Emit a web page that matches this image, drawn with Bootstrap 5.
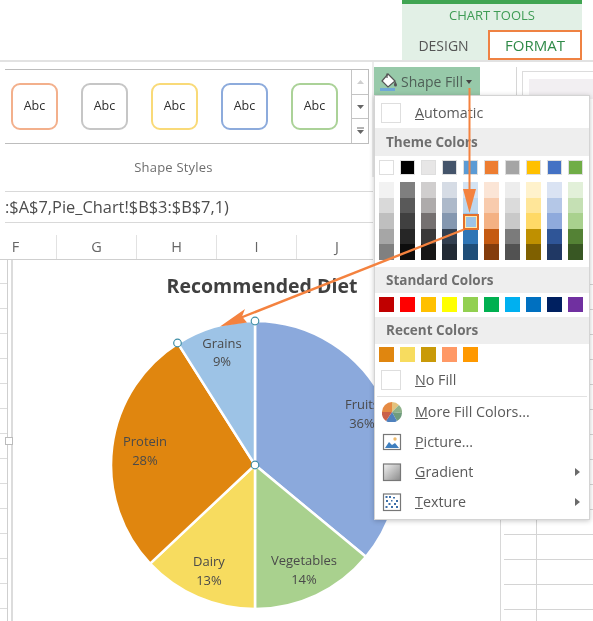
<!DOCTYPE html>
<html lang="en">
<head>
<meta charset="utf-8">
<title>Shape Fill</title>
<link href="https://cdn.jsdelivr.net/npm/bootstrap@5.3.0/dist/css/bootstrap.min.css" rel="stylesheet">
<style>
html,body{margin:0;background:#fff}
body{font-family:"Open Sans","Liberation Sans",sans-serif;color:#555}
.stage{width:593px;height:621px;position:relative;overflow:hidden;background:#fff;filter:blur(.3px)}
.topstrip{height:60px;padding-right:11px}
.ctxgroup{width:180px;background:#e2f0e6;border-top:4px solid #40a552}
.ctxlabel{height:26px;line-height:23px;color:#3f9c55;font-size:13px;text-align:center}
.ctxtabs{height:30px}
.ctxdesign{width:86px;padding-right:3px;line-height:31px;text-align:center;color:#555;font-size:14px}
.ctxformat{width:94px;background:#fff;border:2px solid #ef8243;color:#2f8a48;font-size:15px;line-height:27px;text-align:center}
.ribbonrow{height:117px;border-top:2px solid #e2e2e2}
.ribbonleft{width:374px;padding-left:5px;border-right:2px solid #ececec}
.gallery{width:364px;height:75px;margin-top:7px;border:1.5px solid #bdbdbd;border-left:0;padding-left:6px}
.abc{width:47px;height:47px;flex:none;border:2px solid;border-radius:9px;font-size:12.5px;color:#2e2e2e}
.abc+.abc{margin-left:23px}
.abc1{border-color:#f3b08c}.abc2{border-color:#c6c6c6}.abc3{border-color:#f9da78}.abc4{border-color:#8dabdc}.abc5{border-color:#abd298}
.gscroll{width:17px;height:100%;margin-left:auto;border-left:1px solid #c4c4c4;flex:none}
.gscroll>div{flex:1;border-bottom:1px solid #c4c4c4}
.gscroll>div:last-child{border-bottom:0}
.styleslabel{width:337px;margin-top:14px;text-align:center;font-size:13px;color:#6e6e6e;letter-spacing:.2px}
.shapefill{width:106px;height:29px;margin-top:5px;background:#97c9a9;color:#4f5f57;font-size:14px;gap:2px;padding-left:5px}
.caret-mini{width:0;height:0;margin-left:1px;border-left:3.5px solid transparent;border-right:3.5px solid transparent;border-top:4px solid #444}
.rdivider{width:1px;height:28px;margin:5px 0 0 36px;background:#d6d6d6}
.rthumb{width:71px;height:25px;margin:9px 0 0 5px;border:1px solid #dcdcdc;border-right:0;border-bottom:0;padding:7px 0 0 6px}
.rthumb div{height:20px;background:#f2eff2}
.formula{height:32px;margin-top:14px;margin-left:5px;width:368px;border-top:1.5px solid #d9d9d9;border-bottom:1.5px solid #d9d9d9;font-size:16.4px;line-height:29px;color:#4d4d4d;white-space:nowrap}
.colheads{height:37px;width:373px;border-bottom:1.5px solid #cfcfcf;padding-top:12px;font-size:14.5px;color:#666}
.colh{width:80px;text-align:center;border-right:1px solid #e2e2e2;line-height:24px;flex:none}
.colh0{width:57px;padding-right:25px}
.sheetrow{height:362px}
.rowticks{width:7px;background:repeating-linear-gradient(#fff 0 23px,#dcdcdc 23px 24px,#fff 24px 25px)}
.chartframe{width:494px;border-left:1.5px solid #cfcfcf;border-right:1.5px solid #d8d8d8;position:relative}
.chartframe::before{content:"";position:absolute;left:3px;top:0;bottom:0;width:1.5px;background:#dcdcdc}
.chartsvg{position:absolute;left:-8.5px;top:-260px;width:593px;height:621px;overflow:hidden}
.chartsvg text{font-family:"Open Sans","Liberation Sans",sans-serif;font-size:13px;fill:#4a4a4a;text-anchor:middle}
.chartsvg .ctitle{font-size:19.5px;font-weight:700;fill:#404040}
.handle{position:absolute;left:-3px;width:8px;height:8px;border:1px solid #bbb;background:#fff;z-index:1}
.handlemid{top:177px}
.gridright{margin-left:3px;flex:1;background:repeating-linear-gradient(#fff 0 24px,#d4d4d4 24px 25px) 0 0;position:relative}
.gridright::before{content:"";position:absolute;left:32px;top:0;bottom:0;width:1px;background:#d4d4d4}
.fillmenu.dropdown-menu{left:374px;top:95px;width:216px;height:425px;padding:4px 0 0;margin:0;border:1px solid #d4d4d4;border-radius:0;box-shadow:0 1px 5px rgba(0,0,0,.22);font-size:14px;color:#555;z-index:5;min-width:0}
.fillmenu .dropdown-item{height:25px;padding:0 0 0 40px;line-height:25px;color:#5a5a5a;position:relative;font-size:14.3px}
.fillmenu .iconrow{height:30px;line-height:30px}
.checkbox-mini{position:absolute;left:6px;top:3px;width:20px;height:20px;border:1px solid #dedede;background:#fff}
.micon{position:absolute;left:7px;top:5px;width:20px;height:20px}
.subarrow{position:absolute;right:9px;top:11px;width:0;height:0;border-top:4px solid transparent;border-bottom:4px solid transparent;border-left:5px solid #6a6a6a}
.fillmenu .dropdown-header{background:#eeeeee;padding:0 0 0 11px;color:#6f6f6f;font-weight:700;font-size:13.5px;display:flex;align-items:center}
.head1{height:28px;margin-top:3px}.head2{height:26px;margin-top:7px}.head3{height:27px;margin-top:5px}
.chips{gap:6px;padding-left:4px}
.chips>div{width:15px;height:15px}
.chips1{margin-top:4px}.chips2{margin-top:4px}.chips3{margin-top:3px}
.chips1>div{outline:1px solid #dedede;outline-offset:-1px}
.chips1>div:nth-child(1){background:#fff}.chips1>div:nth-child(2){background:#000}.chips1>div:nth-child(3){background:#e7e6e6}.chips1>div:nth-child(4){background:#44546a}.chips1>div:nth-child(5){background:#5b9bd5}.chips1>div:nth-child(6){background:#ed7d31}.chips1>div:nth-child(7){background:#a5a5a5}.chips1>div:nth-child(8){background:#ffc000}.chips1>div:nth-child(9){background:#4472c4}.chips1>div:nth-child(10){background:#70ad47}
.chips2>div:nth-child(1){background:#c00000}.chips2>div:nth-child(2){background:#f00}.chips2>div:nth-child(3){background:#ffc000}.chips2>div:nth-child(4){background:#ff0}.chips2>div:nth-child(5){background:#92d050}.chips2>div:nth-child(6){background:#00b050}.chips2>div:nth-child(7){background:#00b0f0}.chips2>div:nth-child(8){background:#0070c0}.chips2>div:nth-child(9){background:#002060}.chips2>div:nth-child(10){background:#7030a0}
.chips3>div:nth-child(1){background:#e0860f}.chips3>div:nth-child(2){background:#f7dc5f}.chips3>div:nth-child(3){background:#c99a08}.chips3>div:nth-child(4){background:#ff9966}.chips3>div:nth-child(5){background:#f90}
.shades{margin-top:7px}
.shades>div{height:78px}
.shades>div:nth-child(1){background:linear-gradient(#f2f2f2 20%,#d9d9d9 20% 40%,#bfbfbf 40% 60%,#a6a6a6 60% 80%,#808080 80%)}
.shades>div:nth-child(2){background:linear-gradient(#7f7f7f 20%,#595959 20% 40%,#404040 40% 60%,#262626 60% 80%,#0d0d0d 80%)}
.shades>div:nth-child(3){background:linear-gradient(#d0cece 20%,#aeabab 20% 40%,#757070 40% 60%,#3a3838 60% 80%,#171616 80%)}
.shades>div:nth-child(4){background:linear-gradient(#d6dce5 20%,#adb9ca 20% 40%,#8497b0 40% 60%,#333f50 60% 80%,#222a35 80%)}
.shades>div:nth-child(5){background:linear-gradient(#d4e3f3 20%,#bdd7ee 20% 40%,#9dc3e6 40% 60%,#2e75b6 60% 80%,#1f4e79 80%);position:relative}
.shades>div:nth-child(6){background:linear-gradient(#fbe5d6 20%,#f8cbad 20% 40%,#f4b183 40% 60%,#c55a11 60% 80%,#843c0c 80%)}
.shades>div:nth-child(7){background:linear-gradient(#ededed 20%,#dbdbdb 20% 40%,#c9c9c9 40% 60%,#7b7b7b 60% 80%,#525252 80%)}
.shades>div:nth-child(8){background:linear-gradient(#fff2cc 20%,#ffe699 20% 40%,#ffd966 40% 60%,#bf9000 60% 80%,#7f6000 80%)}
.shades>div:nth-child(9){background:linear-gradient(#dae3f3 20%,#b4c7e7 20% 40%,#8faadc 40% 60%,#2f5597 60% 80%,#203864 80%)}
.shades>div:nth-child(10){background:linear-gradient(#e2f0d9 20%,#c5e0b4 20% 40%,#a9d18e 40% 60%,#548235 60% 80%,#385723 80%)}
.picked{position:absolute;left:0;top:32px;width:16px;height:16px;border:2px solid #e4702c;box-shadow:inset 0 0 0 1px #ffe9a8}
.mrow-fill{margin-top:5px}
.msep{height:1px;margin:4px 2px 0;background:#e2e2e2}
.arrows{position:absolute;left:0;top:0;width:593px;height:621px;z-index:6;pointer-events:none}
</style>
</head>
<body>
<div class="stage">
  <div class="topstrip d-flex justify-content-end">
    <div class="ctxgroup">
      <div class="ctxlabel">CHART TOOLS</div>
      <div class="ctxtabs d-flex">
        <div class="ctxdesign">DESIGN</div>
        <div class="ctxformat">FORMAT</div>
      </div>
    </div>
  </div>

  <div class="ribbonrow d-flex">
    <div class="ribbonleft">
      <div class="gallery d-flex align-items-center">
        <div class="abc abc1 d-flex align-items-center justify-content-center">Abc</div>
        <div class="abc abc2 d-flex align-items-center justify-content-center">Abc</div>
        <div class="abc abc3 d-flex align-items-center justify-content-center">Abc</div>
        <div class="abc abc4 d-flex align-items-center justify-content-center">Abc</div>
        <div class="abc abc5 d-flex align-items-center justify-content-center">Abc</div>
        <div class="gscroll d-flex flex-column">
          <div class="d-flex align-items-center justify-content-center"><svg width="9" height="6" viewBox="0 0 9 6"><path d="M1 5h7L4.500 1z" fill="#cfcfcf"/></svg></div>
          <div class="d-flex align-items-center justify-content-center"><svg width="9" height="6" viewBox="0 0 9 6"><path d="M1 1h7L4.500 5z" fill="#666"/></svg></div>
          <div class="d-flex align-items-center justify-content-center"><svg width="9" height="8" viewBox="0 0 9 8"><path d="M1 1h7" stroke="#666"/><path d="M1 3h7L4.500 7z" fill="#666"/></svg></div>
        </div>
      </div>
      <div class="styleslabel">Shape Styles</div>
    </div>
    <div class="d-flex flex-grow-1 align-items-start">
      <div class="shapefill d-flex align-items-center">
        <svg width="20" height="20" viewBox="0 0 20 20"><path d="M9 2 3 9l6 6 7-6z" fill="#fff" stroke="#555" stroke-width="1.2"/><path d="M8 6V1.500" stroke="#555" stroke-width="1.200"/><path d="M16 9c1 1.500 2 3 2 4a1.500 1.500 0 0 1-3 0c0-1 .5-2.500 1-4z" fill="#555"/><rect x="1" y="16" width="15" height="3" fill="#6fa8d6"/></svg>
        <span>Shape Fill</span>
        <span class="caret-mini"></span>
      </div>
      <div class="rdivider"></div>
      <div class="rthumb flex-grow-1"><div></div></div>
    </div>
  </div>

  <div class="formula">:$A$7,Pie_Chart!$B$3:$B$7,1)</div>

  <div class="colheads d-flex">
    <div class="colh colh0">F</div>
    <div class="colh">G</div>
    <div class="colh">H</div>
    <div class="colh">I</div>
    <div class="colh border-0">J</div>
  </div>

  <div class="sheetrow d-flex">
    <div class="rowticks"></div>
    <div class="chartframe">
      <div class="handle handlemid"></div>
      <svg class="chartsvg" viewBox="0 0 593 621">
        <text class="ctitle" x="262" y="293">Recommended Diet</text>
        <g stroke="#fff" stroke-width="2.5" stroke-linejoin="round">
          <path d="M255 465V321A144 144 0 0 1 365.900 556.800Z" fill="#8ba9dc"/>
          <path d="M255 465L365.900 556.800A144 144 0 0 1 255 609Z" fill="#a9d18e"/>
          <path d="M255 465V609A144 144 0 0 1 150.100 563.600Z" fill="#f7dc5f"/>
          <path d="M255 465L150.100 563.600A144 144 0 0 1 177.900 343.400Z" fill="#e0860f"/>
          <path d="M255 465L177.900 343.400A144 144 0 0 1 255 321Z" fill="#9dc3e6"/>
        </g>
        <text x="222" y="347.500">Grains</text><text x="222" y="366">9%</text>
        <text x="145" y="446">Protein</text><text x="145" y="465">28%</text>
        <text x="209" y="566">Dairy</text><text x="209" y="585">13%</text>
        <text x="304" y="565">Vegetables</text><text x="304" y="584">14%</text>
        <text x="362" y="409">Fruits</text><text x="362" y="428">36%</text>
        <g fill="#fff" stroke="#3f8ea6" stroke-width="1.200">
          <circle cx="255" cy="321" r="3.800"/><circle cx="177.500" cy="343" r="3.800"/><circle cx="255" cy="465" r="3.800"/>
        </g>
      </svg>
    </div>
    <div class="gridright"></div>
  </div>

  <div class="dropdown-menu show fillmenu">
    <div class="dropdown-item"><span class="checkbox-mini"></span><u>A</u>utomatic</div>
    <div class="dropdown-header head1">Theme Colors</div>
    <div class="chips chips1 d-flex"><div></div><div></div><div></div><div></div><div></div><div></div><div></div><div></div><div></div><div></div></div>
    <div class="chips shades d-flex"><div></div><div></div><div></div><div></div><div><span class="picked"></span></div><div></div><div></div><div></div><div></div><div></div></div>
    <div class="dropdown-header head2">Standard Colors</div>
    <div class="chips chips2 d-flex"><div></div><div></div><div></div><div></div><div></div><div></div><div></div><div></div><div></div><div></div></div>
    <div class="dropdown-header head3">Recent Colors</div>
    <div class="chips chips3 d-flex"><div></div><div></div><div></div><div></div><div></div></div>
    <div class="dropdown-item mrow-fill"><span class="checkbox-mini"></span><u>N</u>o Fill</div>
    <div class="msep"></div>
    <div class="dropdown-item iconrow">
      <svg class="micon" viewBox="0 0 20 20"><path d="M10 10V0a10 10 0 0 1 7 3z" fill="#e4c27c"/><path d="M10 10l7-7a10 10 0 0 1 3 8z" fill="#8fb28a"/><path d="M10 10l10 1a10 10 0 0 1-5 8z" fill="#6f9c7d"/><path d="M10 10l5 9a10 10 0 0 1-11 0z" fill="#4f81bd"/><path d="M10 10l-6 9a10 10 0 0 1-4-9z" fill="#c9604a"/><path d="M10 10H0a10 10 0 0 1 10-10z" fill="#e58a43"/></svg>
      <u>M</u>ore Fill Colors...
    </div>
    <div class="dropdown-item iconrow">
      <svg class="micon" viewBox="0 0 20 20"><rect x="1.500" y="2.500" width="17" height="15" fill="#fff" stroke="#777" stroke-width="1.200"/><path d="M3 16l4-6 3 3 3-2 4 5z" fill="#3f7fbf"/><circle cx="13" cy="7" r="1.700" fill="#eeb96a"/></svg>
      <u>P</u>icture...
    </div>
    <div class="dropdown-item iconrow">
      <svg class="micon" viewBox="0 0 20 20"><defs><linearGradient id="gr" x1="0" y1="0" x2="1" y2="1"><stop offset="0" stop-color="#f2f2f2"/><stop offset="1" stop-color="#8a8a8a"/></linearGradient></defs><rect x="1.500" y="2" width="17" height="16.500" fill="url(#gr)" stroke="#777" stroke-width="1.200"/></svg>
      <u>G</u>radient<span class="subarrow"></span>
    </div>
    <div class="dropdown-item iconrow">
      <svg class="micon" viewBox="0 0 20 20"><rect x="1.500" y="2" width="17" height="16.500" fill="#fff" stroke="#777" stroke-width="1.200"/><g fill="#3d6fa8"><rect x="3.500" y="4" width="2" height="2"/><rect x="7" y="4" width="2" height="2"/><rect x="11" y="5" width="2" height="1.500"/><rect x="4" y="8" width="2" height="2"/><rect x="9" y="8" width="1.500" height="1.500"/><rect x="14" y="8" width="2" height="2"/><rect x="6.500" y="11" width="2" height="2"/><rect x="12" y="11" width="2" height="2"/><rect x="3.500" y="14" width="2" height="2"/><rect x="9" y="14" width="2" height="2"/><rect x="14" y="14" width="2" height="2"/></g></svg>
      <u>T</u>exture<span class="subarrow"></span>
    </div>
  </div>

  <svg class="arrows" viewBox="0 0 593 621">
    <g stroke="#f4823f" fill="#f4823f">
      <path d="M469.500 88V195" stroke-width="2" fill="none"/>
      <path d="M463 189h13l-6.500 24z" stroke="none"/>
      <path d="M464 229.500 240 318" stroke-width="2.400" fill="none"/>
      <path d="M220 326.500 245 309l-3 7.500 5 6z" stroke="none"/>
    </g>
  </svg>
</div>
<script src="https://cdn.jsdelivr.net/npm/bootstrap@5.3.0/dist/js/bootstrap.bundle.min.js"></script>
</body>
</html>
